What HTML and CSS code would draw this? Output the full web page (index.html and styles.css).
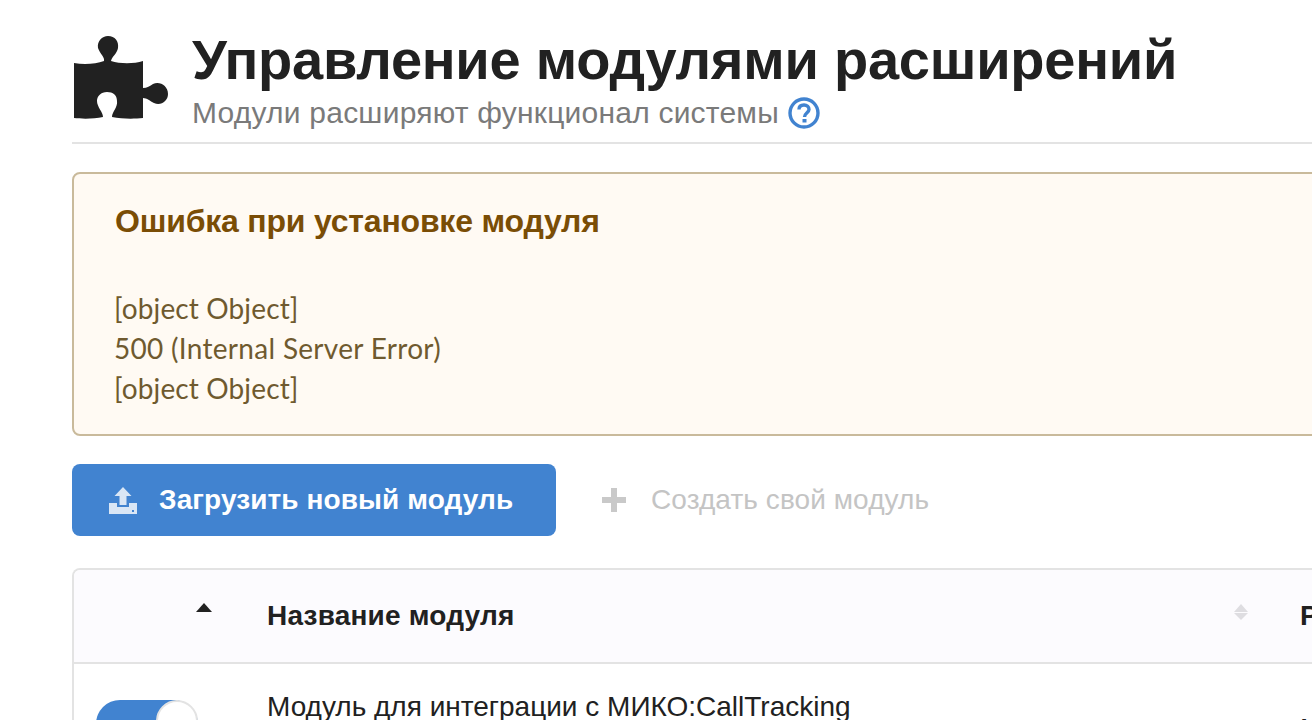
FILE: index.html
```html
<!DOCTYPE html>
<html lang="ru">
<head>
<meta charset="utf-8">
<title>Управление модулями расширений</title>
<link rel="stylesheet" href="styles.css">
</head>
<body>
<main class="page">
  <header class="head">
    <svg class="puzzle" viewBox="0 0 96 84" aria-hidden="true">
      <path d="M0 27 C10 29 22 28 30 25 C31 21 26 18 24 12 C23 5 28 0 34 0 C41 0 45 5 44 12 C43 18 38 20 37 25 C46 28 60 28 69 25 L69 52 C73 52 76 50 79 48 C86 45 94 50 94 58 C94 65 87 70 80 67 C76 65 73 62 69 62 L69 82 C60 83 48 83 38 81 C38 76 44 71 43 65 C43 59 39 56 33 56 C27 56 23 60 23 65 C23 71 29 76 29 81 C20 83 8 83 0 82 Z"/>
    </svg>
    <div class="head-text">
      <h1>Управление модулями расширений</h1>
      <p class="sub">Модули расширяют функционал системы
        <svg class="help" viewBox="0 0 32 32" aria-hidden="true">
          <circle cx="16" cy="16" r="14"/>
          <path d="M11 12.5 C11 9.5 13 8 16 8 C19 8 21 10 21 12.5 C21 15.5 16.5 16 16.5 20"/>
          <path class="dot" d="M14.5 22h4v3.5h-4z"/>
        </svg>
      </p>
    </div>
  </header>

  <section class="message">
    <h2>Ошибка при установке модуля</h2>
    <ul>
      <li>[object Object]</li>
      <li class="wide">500 (Internal Server Error)</li>
      <li>[object Object]</li>
    </ul>
  </section>

  <div class="actions">
    <button class="btn-primary" type="button">
      <svg class="upload" viewBox="0 0 28 28" aria-hidden="true">
        <path d="M14 1 L22.5 10 H17.5 V19 H10.5 V10 H5.5 Z"/>
        <path d="M0 17 H8 V21 H20 V17 H28 V28 H0 Z"/>
        <rect class="pin" x="23" y="24" width="2" height="2"/>
      </svg>
      Загрузить новый модуль
    </button>
    <a class="btn-ghost" href="#">
      <svg class="plus" viewBox="0 0 24 24" aria-hidden="true"><path d="M9 0h6v9h9v6h-9v9H9v-9H0V9h9z"/></svg>
      Создать свой модуль
    </a>
  </div>

  <table class="modules">
    <thead>
      <tr>
        <th class="col-toggle"><span class="arrow-up"></span></th>
        <th class="col-name"><span>Название модуля</span><span class="sort"></span></th>
        <th class="col-next">Разработчик</th>
      </tr>
    </thead>
    <tbody>
      <tr>
        <td class="col-toggle"><span class="toggle"><span class="knob"></span></span></td>
        <td class="col-name">Модуль для интеграции с МИКО:CallTracking</td>
        <td class="col-next cell-low">МИКО</td>
      </tr>
    </tbody>
  </table>
</main>
</body>
</html>
```
FILE: styles.css
```css
* { box-sizing: border-box; }
html, body { margin: 0; height: 720px; overflow: hidden; background: #fff; }
body { font-family: "Liberation Sans", Arial, sans-serif; color: #212121; }
.page { width: 1600px; padding: 28px 0 0 72px; }

.head { display: flex; align-items: flex-start; height: 116px; border-bottom: 2px solid #e3e3e3; }
.puzzle { width: 96px; height: 84px; margin: 8px 22px 0 2px; fill: #212121; flex: none; }
.head-text { min-width: 0; }
h1 { margin: 2px 0 -2px; font-size: 56px; line-height: 60px; font-weight: 700; letter-spacing: -0.25px; white-space: nowrap; color: #212121; }
.sub { margin: 0; font-size: 30px; line-height: 50px; letter-spacing: 0.22px; color: #7a7a7a; white-space: nowrap; display: flex; align-items: center; gap: 9px; height: 50px; }
.help { width: 32px; height: 32px; fill: none; stroke: #4183d0; stroke-width: 3.4; }
.help .dot { fill: #4183d0; stroke: none; }

.message { margin-top: 28px; height: 264px; padding: 28px 41px; background: #fffaf3; border: 2px solid #c9ba9b; border-radius: 8px; color: #6f5a2f; }
.message h2 { margin: 0; font-size: 32px; line-height: 38px; font-weight: 700; letter-spacing: -0.2px; color: #7a4d05; }
.message ul { list-style: none; margin: 48px 0 0 -1px; padding: 0; font-family: Lato, "Liberation Sans", sans-serif; }
.message li { font-size: 28px; line-height: 40px; letter-spacing: 0.13px; }
.message .wide { letter-spacing: 0.3px; }

.actions { display: flex; align-items: center; margin-top: 28px; height: 72px; }
.btn-primary { display: flex; align-items: center; gap: 22px; width: 484px; height: 72px; padding: 0 0 0 37px; border: 0; border-radius: 8px; background: #4183d0; color: #fff; font: 700 28px "Liberation Sans", Arial, sans-serif; letter-spacing: 0.1px; white-space: nowrap; }
.upload { width: 28px; height: 28px; fill: #d9e6f5; flex: none; }
.upload .pin { fill: #4183d0; }
.btn-ghost { display: flex; align-items: center; gap: 25px; margin-left: 46px; font-size: 28px; font-weight: 400; letter-spacing: 0.08px; color: #c4c4c4; text-decoration: none; white-space: nowrap; }
.plus { width: 24px; height: 24px; fill: #c9c9c9; flex: none; }

.modules { margin-top: 32px; width: 1528px; border-collapse: separate; border-spacing: 0; table-layout: fixed; border: 2px solid #e3e3e3; border-bottom: 0; border-radius: 8px 8px 0 0; font-size: 28px; }
.modules th { height: 94px; padding: 0; background: #fcfbfe; border-bottom: 2px solid #e3e3e3; text-align: left; font-weight: 700; letter-spacing: 0.2px; white-space: nowrap; vertical-align: middle; }
.modules th:first-child { border-top-left-radius: 6px; }
.modules td { padding: 25px 0 0; vertical-align: top; line-height: 36px; white-space: nowrap; }
.modules .cell-low { padding-top: 47px; }
.modules .col-name { padding-left: 1px; }
.col-toggle { width: 192px; position: relative; }
.col-name { width: 1034px; }
th.col-name { position: relative; }
.arrow-up { position: absolute; left: 122px; top: 33px; border-left: 8px solid transparent; border-right: 8px solid transparent; border-bottom: 9px solid #212121; }
.sort { position: absolute; left: 968px; top: 34px; width: 14px; height: 16px; }
.sort::before { content: ""; position: absolute; left: 0; top: 0; border-left: 7px solid transparent; border-right: 7px solid transparent; border-bottom: 8px solid #dedde1; }
.sort::after { content: ""; position: absolute; left: 0; top: 9px; border-left: 7px solid transparent; border-right: 7px solid transparent; border-top: 7px solid #dedde1; }
.toggle { display: block; position: absolute; left: 22px; top: 36px; width: 102px; height: 48px; border-radius: 24px; background: #4183d0; }
.knob { position: absolute; right: 0; top: 0; width: 42px; height: 42px; border-radius: 50%; background: #fff; border: 2px solid #e3e3e3; }
```
